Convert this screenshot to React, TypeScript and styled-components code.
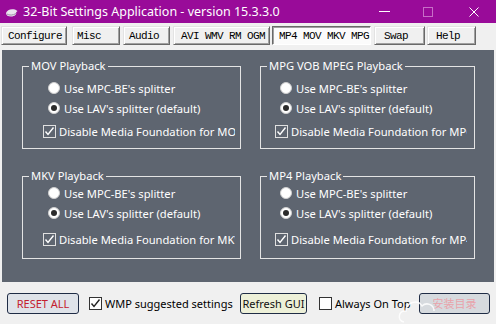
import React from 'react';
import styled, { createGlobalStyle } from 'styled-components';

const Global = createGlobalStyle`
  html, body { margin: 0; padding: 0; background: #f0f0f0; }
  body { width: 496px; height: 324px; overflow: hidden; }
`;

const UI = `"Noto Sans", "Open Sans", "Noto Sans CJK SC", sans-serif`;
const PANEL = '#5e6570';

const Window = styled.div`
  width: 496px;
  height: 324px;
  display: flex;
  flex-direction: column;
  background: #f0f0f0;
  overflow: hidden;
`;

const TitleBar = styled.div`
  height: 23px;
  flex: none;
  background: #990b99;
  display: flex;
  align-items: center;
  padding-left: 5px;
  color: #fff;
`;

const AppIcon = styled.svg`
  width: 13px;
  height: 9px;
  flex: none;
  margin: 1px 5px 0 0;
`;

const Title = styled.div`
  flex: 1;
  font-family: ${UI};
  font-size: 12.5px;
  white-space: nowrap;
`;

const CtrlBtn = styled.div<{ $w: number }>`
  width: ${(p) => p.$w}px;
  height: 100%;
  display: flex;
  align-items: center;
  justify-content: center;
`;

const TabBar = styled.div`
  height: 27px;
  flex: none;
  display: flex;
  align-items: flex-start;
  padding: 3px 0 0 1px;
  box-sizing: border-box;
`;

const TabButton = styled.div<{ $w: number; $gap: number; $pad: number; $active?: boolean }>`
  width: ${(p) => p.$w}px;
  margin-left: ${(p) => p.$gap}px;
  height: 19px;
  box-sizing: border-box;
  padding-left: ${(p) => p.$pad}px;
  display: flex;
  align-items: center;
  font-family: "Liberation Mono", "Courier New", monospace;
  font-size: 11px;
  letter-spacing: -0.6px;
  color: #000;
  white-space: nowrap;
  background: ${(p) => (p.$active ? '#fbfbfb' : '#f0f0f0')};
  border: 1px solid;
  border-color: ${(p) => (p.$active ? '#696969 #ffffff #ffffff #696969' : '#e3e3e3 #696969 #696969 #e3e3e3')};
  box-shadow: ${(p) => (p.$active ? 'inset 1px 1px 0 #a0a0a0' : 'inset 1px 1px 0 #ffffff, inset -1px -1px 0 #a0a0a0')};
`;

const Panel = styled.div`
  height: 232px;
  flex: none;
  margin: 0 2px;
  background: ${PANEL};
  display: grid;
  grid-template-columns: 219px 215px;
  grid-auto-rows: 83px;
  column-gap: 19px;
  row-gap: 27px;
  padding: 16px 0 0 20px;
  box-sizing: border-box;
  align-content: start;
`;

const Group = styled.div`
  border: 1px solid #e4e4e4;
  box-sizing: border-box;
  display: flex;
  flex-direction: column;
  min-width: 0;
`;

const Caption = styled.div`
  align-self: flex-start;
  margin: -9px 0 0 6px;
  padding: 0 2px;
  background: ${PANEL};
  color: #fff;
  font-family: ${UI};
  font-size: 11.2px;
  line-height: 16px;
  white-space: nowrap;
`;

const RadioRow = styled.div<{ $inset: number; $top?: number }>`
  height: 20px;
  display: flex;
  align-items: center;
  padding-left: ${(p) => p.$inset}px;
  margin-top: ${(p) => p.$top ?? 0}px;
  color: #fff;
  font-family: ${UI};
  font-size: 11.2px;
  white-space: nowrap;
`;

const RadioDot = styled.span<{ $on?: boolean }>`
  width: 12px;
  height: 12px;
  flex: none;
  box-sizing: border-box;
  border-radius: 50%;
  background: #fff;
  border: 1px solid #cfcfcf;
  margin-right: 4px;
  display: flex;
  align-items: center;
  justify-content: center;
  &::after {
    content: '';
    display: ${(p) => (p.$on ? 'block' : 'none')};
    width: 6px;
    height: 6px;
    border-radius: 50%;
    background: #2b2b2b;
  }
`;

const CheckRow = styled.div<{ $inset: number; $top: number }>`
  height: 20px;
  width: 192px;
  overflow: hidden;
  display: flex;
  align-items: center;
  margin: ${(p) => p.$top}px 0 0 ${(p) => p.$inset}px;
  color: #fff;
  font-family: ${UI};
  font-size: 11.2px;
  white-space: nowrap;
`;

const Box = styled.span<{ $light?: boolean }>`
  width: 13px;
  height: 13px;
  flex: none;
  box-sizing: border-box;
  border: 1px solid ${(p) => (p.$light ? '#333333' : '#e0e0e0')};
  background: ${(p) => (p.$light ? '#ffffff' : 'transparent')};
  margin-right: 3px;
  display: flex;
  align-items: center;
  justify-content: center;
`;

const BottomBar = styled.div`
  flex: 1;
  display: flex;
  align-items: center;
  padding-left: 7px;
  position: relative;
`;

const ActionButton = styled.div<{ $w: number; $gap: number; $bg: string; $fg: string }>`
  width: ${(p) => p.$w}px;
  margin-left: ${(p) => p.$gap}px;
  height: 21px;
  flex: none;
  box-sizing: border-box;
  border: 1px solid #1f2c45;
  border-radius: 3px;
  background: ${(p) => p.$bg};
  color: ${(p) => p.$fg};
  display: flex;
  align-items: center;
  justify-content: center;
  font-family: ${UI};
  font-size: 11px;
  white-space: nowrap;
`;

const BarCheck = styled.div<{ $w: number; $gap: number }>`
  width: ${(p) => p.$w}px;
  margin-left: ${(p) => p.$gap}px;
  flex: none;
  display: flex;
  align-items: center;
  font-family: ${UI};
  font-size: 11px;
  color: #000;
  white-space: nowrap;
`;

const Watermark = styled.svg`
  position: absolute;
  left: 398px;
  top: 10px;
  width: 48px;
  height: 32px;
  pointer-events: none;
`;

const Tick = ({ color }: { color: string }) => (
  <svg width="11" height="11" viewBox="0 0 11 11">
    <polyline points="1.5,5.5 4,8.5 9.5,1.5" fill="none" stroke={color} strokeWidth="1.4" />
  </svg>
);

const tabs = [
  { label: 'Configure', w: 66, gap: 0, pad: 6 },
  { label: 'Misc', w: 48, gap: 5, pad: 4 },
  { label: 'Audio', w: 47, gap: 3, pad: 5 },
  { label: 'AVI WMV RM OGM', w: 97, gap: 3, pad: 7 },
  { label: 'MP4 MOV MKV MPG', w: 99, gap: 2, pad: 6, active: true },
  { label: 'Swap', w: 51, gap: 3, pad: 9 },
  { label: 'Help', w: 49, gap: 2, pad: 8 },
];

const groups = [
  { title: 'MOV Playback', fmt: 'MOV', inset: 20, first: 4, gap: 3 },
  { title: 'MPG VOB MPEG Playback', fmt: 'MPG', inset: 14, first: 4, gap: 3 },
  { title: 'MKV Playback', fmt: 'MKV', inset: 20, first: -1, gap: 6 },
  { title: 'MP4 Playback', fmt: 'MP4', inset: 14, first: -1, gap: 6 },
];

export default function App() {
  return (
    <Window>
      <Global />
      <TitleBar>
        <AppIcon viewBox="0 0 13 9">
          <path d="M1 5 C2 1.5 6 0.5 10 1.5 L12.5 3 L11 4.5 C12 6 10 8.5 6 8.5 C3 8.5 1 7.5 1 5 Z" fill="#e9e4ee" />
          <path d="M2 6 C4 7.5 8 7.5 11 5.5" fill="none" stroke="#9d8fa8" strokeWidth="1" />
        </AppIcon>
        <Title>32-Bit Settings Application - version 15.3.3.0</Title>
        <CtrlBtn $w={42}>
          <svg width="11" height="1" viewBox="0 0 11 1"><rect width="11" height="1" fill="#fff" /></svg>
        </CtrlBtn>
        <CtrlBtn $w={46}>
          <svg width="10" height="10" viewBox="0 0 10 10"><rect x="0.5" y="0.5" width="9" height="9" fill="none" stroke="#c76ec7" /></svg>
        </CtrlBtn>
        <CtrlBtn $w={45}>
          <svg width="10" height="10" viewBox="0 0 10 10"><path d="M0.5 0.5 L9.5 9.5 M9.5 0.5 L0.5 9.5" stroke="#fff" strokeWidth="1" /></svg>
        </CtrlBtn>
      </TitleBar>

      <TabBar>
        {tabs.map((t) => (
          <TabButton key={t.label} $w={t.w} $gap={t.gap} $pad={t.pad} $active={t.active}>
            {t.label}
          </TabButton>
        ))}
      </TabBar>

      <Panel>
        {groups.map((g) => (
          <Group key={g.title}>
            <Caption>{g.title}</Caption>
            <RadioRow $inset={g.inset + 5} $top={g.first}>
              <RadioDot />
              Use MPC-BE's splitter
            </RadioRow>
            <RadioRow $inset={g.inset + 5}>
              <RadioDot $on />
              Use LAV's splitter (default)
            </RadioRow>
            <CheckRow $inset={g.inset} $top={g.gap}>
              <Box>
                <Tick color="#ffffff" />
              </Box>
              Disable Media Foundation for {g.fmt}
            </CheckRow>
          </Group>
        ))}
      </Panel>

      <BottomBar>
        <ActionButton $w={72} $gap={0} $bg="#dfe3e9" $fg="#c4202e">RESET ALL</ActionButton>
        <BarCheck $w={145} $gap={10}>
          <Box $light>
            <Tick color="#222" />
          </Box>
          WMP suggested settings
        </BarCheck>
        <ActionButton $w={67} $gap={6} $bg="#edf0d8" $fg="#111">Refresh GUI</ActionButton>
        <BarCheck $w={88} $gap={12}>
          <Box $light />
          Always On Top
        </BarCheck>
        <ActionButton $w={71} $gap={12} $bg="#d6dade" $fg="#e9a3ab">安装目录</ActionButton>
        <Watermark viewBox="0 0 48 32">
          <path d="M6 30 C-1 29 0 18 8 19 C8 10 20 7 24 14 C28 10 36 12 36 19" fill="none" stroke="#ffffff" strokeWidth="1.5" opacity="0.85" />
        </Watermark>
      </BottomBar>
    </Window>
  );
}
